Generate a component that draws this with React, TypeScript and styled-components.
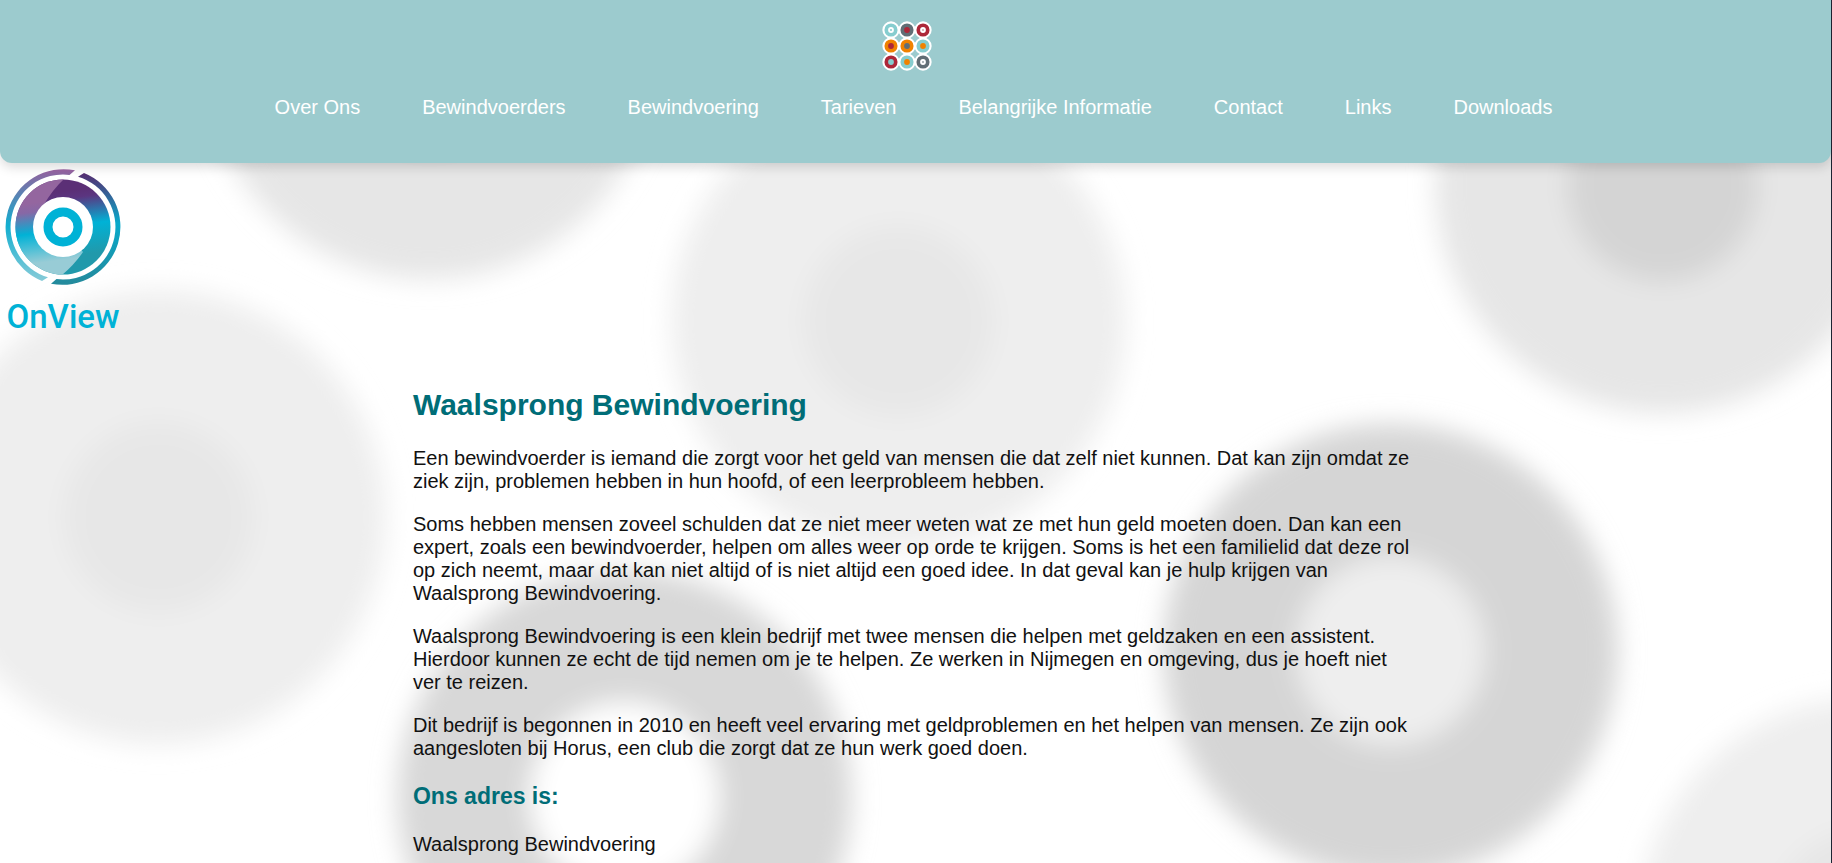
import React from "react";
import styled, { createGlobalStyle } from "styled-components";

const GlobalStyle = createGlobalStyle`
  * { box-sizing: border-box; }
  body {
    margin: 0;
    background: #ffffff;
    font-family: "Liberation Sans", Arial, Helvetica, sans-serif;
    font-size: 20px;
    line-height: 23px;
    color: #111111;
  }
`;

const Page = styled.div`
  position: relative;
  min-height: 100vh;
  border-right: 1px solid #1d2433;
`;

const Backdrop = styled.svg`
  position: absolute;
  inset: 0;
  width: 100%;
  height: 100%;
  z-index: -1;
`;

const Header = styled.header`
  display: flex;
  flex-direction: column;
  align-items: center;
  gap: 25px;
  padding: 21px 0 44px;
  background: #9ccbce;
  border-radius: 0 0 12px 12px;
  box-shadow: 0 4px 12px rgba(0, 0, 0, 0.15);
`;

const HomeLink = styled.a`
  display: block;
  height: 50px;
  margin-right: 18px;
`;

const NavList = styled.ul`
  display: flex;
  flex-wrap: wrap;
  justify-content: center;
  gap: 62px;
  margin: 0;
  padding: 0 4px 0 0;
  list-style: none;
`;

const NavLink = styled.a`
  color: #ffffff;
  text-decoration: none;
`;

const PartnerLink = styled.a`
  display: block;
  width: 128px;
  height: 176px;
`;

const Content = styled.main`
  width: 55%;
  margin: 0 auto;
  padding: 48px 0 0 1px;
`;

const Title = styled.h1`
  margin: 0 0 25px;
  font-size: 30px;
  line-height: 35px;
  color: #006d77;
`;

const Subtitle = styled.h2`
  margin: 23px 0;
  font-size: 23px;
  line-height: 27px;
  color: #006d77;
`;

const Paragraph = styled.p`
  margin: 0 0 20px;

  &:last-child {
    margin-bottom: 0;
  }
`;

const rings = [
  { x: 430, y: 52, outer: "#e6e6e6", inner: "#d5d5d5" },
  { x: 899, y: 321, outer: "#eeeeee", inner: "#e7e7e7" },
  { x: 1663, y: 186, outer: "#e6e6e6", inner: "#d4d4d4" },
  { x: 159, y: 517, outer: "#eeeeee", inner: "#e7e7e7" },
  { x: 625, y: 797, outer: "#d8d8d8", inner: "#ffffff" },
  { x: 1391, y: 651, outer: "#d5d5d5", inner: "#eeeeee" },
  { x: 1867, y: 925, outer: "#eeeeee", inner: "#e6e6e6" },
];

const dots = [
  ["#86cdcf", "#ffffff", "#86cdcf"],
  ["#616e75", "#ad2738", "#ad2738"],
  ["#ad2738", "#ffffff", "#d3a0a6"],
  ["#f08200", "#ad2738", "#ad2738"],
  ["#f08200", "#616e75", "#616e75"],
  ["#86cdcf", "#f08200", "#f08200"],
  ["#ad2738", "#86cdcf", "#86cdcf"],
  ["#86cdcf", "#f08200", "#f08200"],
  ["#616e75", "#ffffff", "#9aa3a8"],
];

const links = [
  "Over Ons",
  "Bewindvoerders",
  "Bewindvoering",
  "Tarieven",
  "Belangrijke Informatie",
  "Contact",
  "Links",
  "Downloads",
];

const paragraphs = [
  "Een bewindvoerder is iemand die zorgt voor het geld van mensen die dat zelf niet kunnen. Dat kan zijn omdat ze ziek zijn, problemen hebben in hun hoofd, of een leerprobleem hebben.",
  "Soms hebben mensen zoveel schulden dat ze niet meer weten wat ze met hun geld moeten doen. Dan kan een expert, zoals een bewindvoerder, helpen om alles weer op orde te krijgen. Soms is het een familielid dat deze rol op zich neemt, maar dat kan niet altijd of is niet altijd een goed idee. In dat geval kan je hulp krijgen van Waalsprong Bewindvoering.",
  "Waalsprong Bewindvoering is een klein bedrijf met twee mensen die helpen met geldzaken en een assistent. Hierdoor kunnen ze echt de tijd nemen om je te helpen. Ze werken in Nijmegen en omgeving, dus je hoeft niet ver te reizen.",
  "Dit bedrijf is begonnen in 2010 en heeft veel ervaring met geldproblemen en het helpen van mensen. Ze zijn ook aangesloten bij Horus, een club die zorgt dat ze hun werk goed doen.",
];

function RingBackdrop() {
  return (
    <Backdrop viewBox="0 0 1832 863" preserveAspectRatio="xMidYMid slice" aria-hidden="true">
      <defs>
        <filter id="soften" filterUnits="userSpaceOnUse" x="0" y="-260" width="1832" height="1500">
          <feGaussianBlur stdDeviation="13" />
        </filter>
      </defs>
      <g filter="url(#soften)">
        {rings.map((r) => (
          <g key={r.x}>
            <circle cx={r.x} cy={r.y} r="227" fill={r.outer} />
            <circle cx={r.x} cy={r.y} r="95" fill={r.inner} />
          </g>
        ))}
      </g>
    </Backdrop>
  );
}

function DotLogo() {
  return (
    <svg width="50" height="50" viewBox="0 0 50 50" aria-hidden="true">
      {dots.map(([ring, core, pip], i) => {
        const cx = 9 + (i % 3) * 16;
        const cy = 9 + Math.floor(i / 3) * 16;
        return (
          <g key={i}>
            <circle cx={cx} cy={cy} r="7.6" fill={ring} stroke="#ffffff" strokeWidth="2.1" />
            <circle cx={cx} cy={cy} r="2.9" fill={core} />
            <circle cx={cx} cy={cy} r="1" fill={pip} />
          </g>
        );
      })}
    </svg>
  );
}

function OnViewLogo() {
  return (
    <svg width="128" height="176" viewBox="0 0 128 176" role="img" aria-label="OnView">
      <defs>
        <linearGradient id="disc" gradientUnits="userSpaceOnUse" x1="57" y1="18" x2="69" y2="110">
          <stop offset="0.12" stopColor="#5b2f76" />
          <stop offset="0.2" stopColor="#5b3580" />
          <stop offset="0.5" stopColor="#00b2d6" />
          <stop offset="0.82" stopColor="#2199ab" />
        </linearGradient>
        <linearGradient id="discLight" gradientUnits="userSpaceOnUse" x1="57" y1="18" x2="69" y2="110">
          <stop offset="0.2" stopColor="#94669f" />
          <stop offset="0.3" stopColor="#8668a6" />
          <stop offset="0.53" stopColor="#00b2d6" />
          <stop offset="0.85" stopColor="#98ccd6" />
        </linearGradient>
        <linearGradient id="arcLeft" x1="0" y1="0" x2="0" y2="1">
          <stop offset="0" stopColor="#965f9c" />
          <stop offset="0.5" stopColor="#12aed0" />
          <stop offset="1" stopColor="#86cbd8" />
        </linearGradient>
        <linearGradient id="arcRight" x1="0" y1="0" x2="0" y2="1">
          <stop offset="0" stopColor="#562c70" />
          <stop offset="0.45" stopColor="#08aacb" />
          <stop offset="1" stopColor="#24899b" />
        </linearGradient>
        <clipPath id="lightHalf">
          <path d="M64 16 Q53 26 43 43 L63 64 L83 89 Q75 101 62 112 H0 V16 Z" />
        </clipPath>
      </defs>
      <circle cx="63" cy="64" r="54" fill="#ffffff" />
      <path
        d="M75 7.3 L69.5 11.9 A52.5 52.5 0 0 0 48 114.3 L42 118 A58 58 0 0 1 75 7.3 Z"
        fill="url(#arcLeft)"
      />
      <path
        d="M84 10 L78 13.7 A52.5 52.5 0 0 1 56.5 116.1 L51 120.7 A58 58 0 0 0 84 10 Z"
        fill="url(#arcRight)"
      />
      <circle cx="63" cy="64" r="47.5" fill="url(#disc)" />
      <circle cx="63" cy="64" r="47.5" fill="url(#discLight)" clipPath="url(#lightHalf)" />
      <circle cx="63" cy="64" r="30" fill="#ffffff" />
      <circle cx="63" cy="64" r="15" fill="none" stroke="#00b2d6" strokeWidth="9" />
      <text
        x="63"
        y="165"
        textAnchor="middle"
        fontFamily='Roboto, "Liberation Sans", sans-serif'
        fontWeight="500"
        fontSize="33"
        fill="#00b2d6"
      >
        OnView
      </text>
    </svg>
  );
}

export default function App() {
  return (
    <Page>
      <GlobalStyle />
      <RingBackdrop />
      <Header>
        <HomeLink href="#" aria-label="Home">
          <DotLogo />
        </HomeLink>
        <nav>
          <NavList>
            {links.map((label) => (
              <li key={label}>
                <NavLink href="#">{label}</NavLink>
              </li>
            ))}
          </NavList>
        </nav>
      </Header>
      <PartnerLink href="#">
        <OnViewLogo />
      </PartnerLink>
      <Content>
        <Title>Waalsprong Bewindvoering</Title>
        {paragraphs.map((text) => (
          <Paragraph key={text}>{text}</Paragraph>
        ))}
        <Subtitle>Ons adres is:</Subtitle>
        <Paragraph>Waalsprong Bewindvoering</Paragraph>
      </Content>
    </Page>
  );
}
